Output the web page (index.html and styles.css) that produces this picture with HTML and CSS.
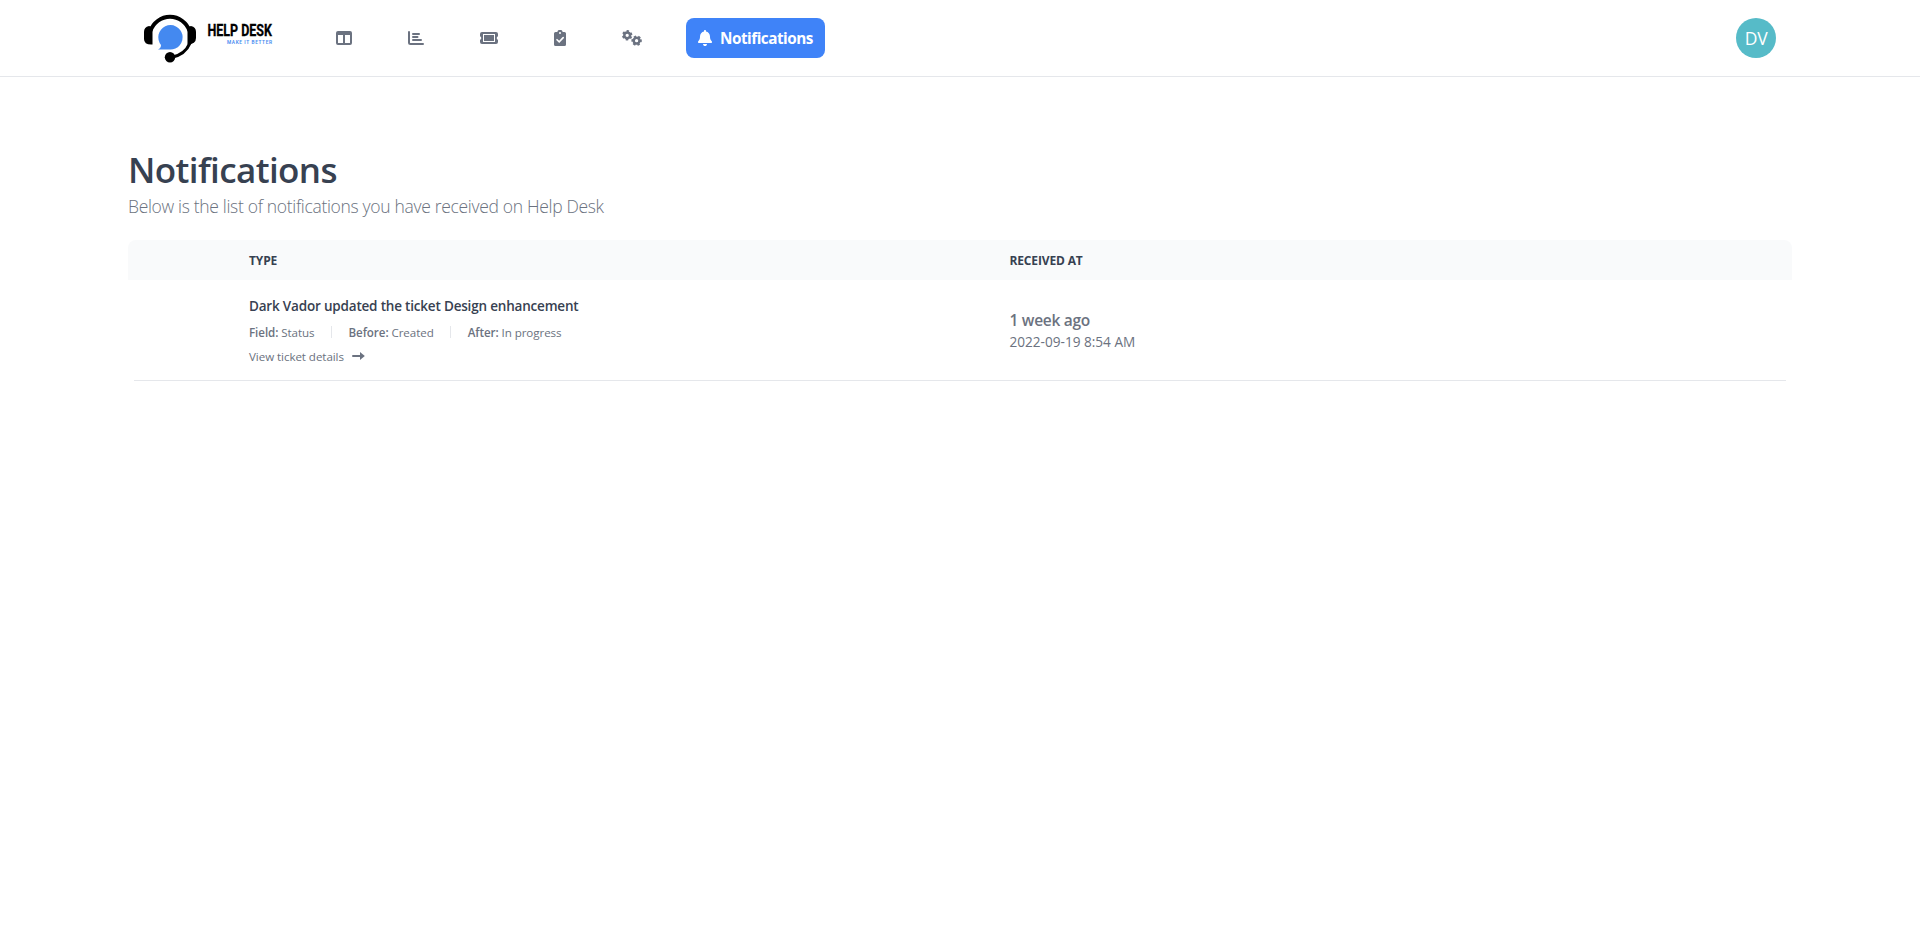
FILE: index.html
```
<!DOCTYPE html>
<html lang="en">
<head>
<meta charset="utf-8">
<title>Notifications - Help Desk</title>
<link rel="stylesheet" href="styles.css">
</head>
<body>
<header class="topbar">
  <a class="logo">
    <svg width="134" height="56" viewBox="0 0 134 56">
      <path d="M6.500 22A20.500 20.500 0 0 1 45.500 22" fill="none" stroke="#000" stroke-width="4"/>
      <path d="M46 34Q41 46 27 48.500" fill="none" stroke="#000" stroke-width="3.200"/>
      <path d="M8.500 18V35.500Q0 36 0 30V23Q0 18 5 17ZM43.500 18V35.500Q52 35 52 29V23Q52 18 47 17Z"/>
      <circle cx="26" cy="48.300" r="5.200"/>
      <path d="M14 40.500Q17 39 17 36A12.200 12.200 0 1 1 26 40.500Z" fill="#4489f0"/>
      <text class="logo-name" x="63.500" y="27" textLength="64.500" lengthAdjust="spacingAndGlyphs">HELP DESK</text>
      <text class="logo-tag" x="83" y="35" textLength="45" lengthAdjust="spacing">MAKE IT BETTER</text>
    </svg>
  </a>
  <nav class="nav">
    <a><svg width="16" height="14" viewBox="0 0 16 14"><path fill-rule="evenodd" d="M2 0H14Q16 0 16 2V12Q16 14 14 14H2Q0 14 0 12V2Q0 0 2 0ZM2 4V12H7V4ZM9 4V12H14V4Z"/></svg></a>
    <a><svg width="16" height="14" viewBox="0 0 16 14"><path d="M1 1V11.500Q1 13 2.500 13H15M5 3H11M5 6H9.500M5 9H13" fill="none" stroke="currentColor" stroke-width="2" stroke-linecap="round"/></svg></a>
    <a><svg width="18" height="12" viewBox="0 0 18 12"><path fill-rule="evenodd" d="M2 0H16Q18 0 18 2V4.200A1.900 1.900 0 0 0 18 7.800V10Q18 12 16 12H2Q0 12 0 10V7.800A1.900 1.900 0 0 0 0 4.200V2Q0 0 2 0ZM3 2V10H15V2ZM4 3H14V9H4Z"/></svg></a>
    <a><svg width="12" height="16" viewBox="0 0 12 16"><path fill-rule="evenodd" d="M1.500 2H3.300A2.750 2.750 0 0 1 8.700 2H10.500Q12 2 12 3.500V14.500Q12 16 10.500 16H1.500Q0 16 0 14.500V3.500Q0 2 1.500 2ZM6 2A1 1 0 1 0 6 4A1 1 0 1 0 6 2Z"/><path d="M3 9.700L5.200 11.900L9.200 7.600" fill="none" stroke="#fff" stroke-width="1.600" stroke-linecap="round"/></svg></a>
    <a><svg width="20" height="16" viewBox="0 0 20 16"><g fill="none" stroke="currentColor"><circle cx="5.200" cy="5.300" r="2.900" stroke-width="2.500"/><circle cx="5.200" cy="5.300" r="4.300" stroke-width="1.800" stroke-dasharray="2.400 2.103" transform="rotate(15 5.200 5.300)"/><circle cx="14.600" cy="10.700" r="2.900" stroke-width="2.500"/><circle cx="14.600" cy="10.700" r="4.300" stroke-width="1.800" stroke-dasharray="2.400 2.103" transform="rotate(-16 14.600 10.700)"/></g></svg></a>
  </nav>
  <a class="nav-active">
    <svg width="14" height="16" viewBox="0 0 448 512"><path d="M224 0c-18 0-32 14-32 32v19C119 66 64 130 64 208v19c0 47-17 92-48 127l-8 9c-8 9-10 23-5 34s16 19 29 19h384c13 0 24-8 29-19s3-25-5-34l-8-9c-31-35-48-80-48-127v-19c0-78-55-142-128-157V32c0-18-14-32-32-32zm45 493c12-12 19-28 19-45H160c0 17 7 33 19 45s28 19 45 19 33-7 45-19z"/></svg>
    <span>Notifications</span>
  </a>
  <div class="avatar">DV</div>
</header>
<main class="page">
  <h1 class="title">Notifications</h1>
  <p class="subtitle">Below is the list of notifications you have received on Help Desk</p>
  <section class="table">
    <div class="table-head">
      <span></span><span class="head-type">TYPE</span><span class="head-received">RECEIVED AT</span>
    </div>
    <div class="table-row">
      <span></span>
      <div class="details">
        <div class="event">Dark Vador updated the ticket Design enhancement</div>
        <div class="changes">
          <span class="field"><b>Field:</b> Status</span><i></i>
          <span class="before"><b>Before:</b> Created</span><i></i>
          <span class="after"><b>After:</b> In progress</span>
        </div>
        <a class="view"><span>View ticket details</span>
          <svg width="13" height="8" viewBox="0 0 13 8"><path d="M1 4H9" stroke="currentColor" stroke-width="2" stroke-linecap="round"/><path d="M8 0L12.800 4L8 8Z"/></svg>
        </a>
      </div>
      <div class="received">
        <div class="ago">1 week ago</div>
        <div class="date">2022-09-19 8:54 AM</div>
      </div>
    </div>
  </section>
</main>
</body>
</html>
```
FILE: styles.css
```
* { box-sizing: border-box; }
body { margin: 0; background: #fff; font-family: "Open Sans", "Noto Sans", sans-serif; color: #6b7280; }
svg { display: block; fill: currentColor; }
.topbar { display: flex; align-items: center; height: 77px; padding: 0 144px; border-bottom: 1px solid #e5e7eb; white-space: nowrap; }
.logo { color: #000; width: 134px; margin-bottom: 3px; }
.logo svg { overflow: visible; }
.logo-name { font: 700 16px "Roboto", sans-serif; stroke: #000; stroke-width: .3px; }
.logo-tag { font: 600 4.8px "Roboto", sans-serif; fill: #4489f0; }
.nav { display: flex; align-items: center; gap: 56px; margin-left: 58px; }
.nav-active { display: flex; align-items: center; gap: 8px; width: 139px; height: 40px; margin-left: 44px; padding-left: 12px; border-radius: 8px; background: #3f83f8; color: #fff; font-size: 15.3px; font-weight: 700; letter-spacing: -0.5px; }
.avatar { width: 40px; height: 40px; margin-left: auto; border-radius: 50%; background: #56bbc8; color: #fff; font-size: 17.5px; font-weight: 400; line-height: 41px; text-align: center; letter-spacing: -0.3px; }
.page { padding: 69px 128px 0; white-space: nowrap; }
.title { margin: 0; color: #374151; font-size: 35px; line-height: 48px; font-weight: 600; letter-spacing: -0.6px; }
.subtitle { margin: 0; font-size: 17.5px; line-height: 25px; font-weight: 300; letter-spacing: -0.32px; }
.table { margin-top: 21px; }
.table-head, .table-row { display: grid; grid-template-columns: 121px 760.5px 1fr; align-items: center; }
.table-head { height: 40px; border-radius: 8px 8px 0 0; background: #f9fafb; color: #374151; font-size: 12px; font-weight: 700; letter-spacing: -0.15px; }
.table-row { height: 101px; margin: 0 6px; grid-template-columns: 115px 760.5px 1fr; border-bottom: 1px solid #e5e7eb; }
.event { color: #374151; font-size: 13.5px; line-height: 20px; font-weight: 600; letter-spacing: -0.19px; }
.changes { display: flex; align-items: center; height: 16px; margin-top: 8px; font-size: 11.6px; letter-spacing: -0.07px; }
.changes b { font-weight: 600; }
.changes i { width: 1px; height: 12px; margin: 0 16.5px; background: #e5e7eb; }
.view { display: flex; align-items: center; gap: 8px; height: 16px; margin-top: 8px; font-size: 11.6px; letter-spacing: -0.07px; }
.ago { font-size: 15.5px; line-height: 24px; font-weight: 600; letter-spacing: -0.3px; }
.date { font-size: 13.6px; line-height: 20px; }
```
